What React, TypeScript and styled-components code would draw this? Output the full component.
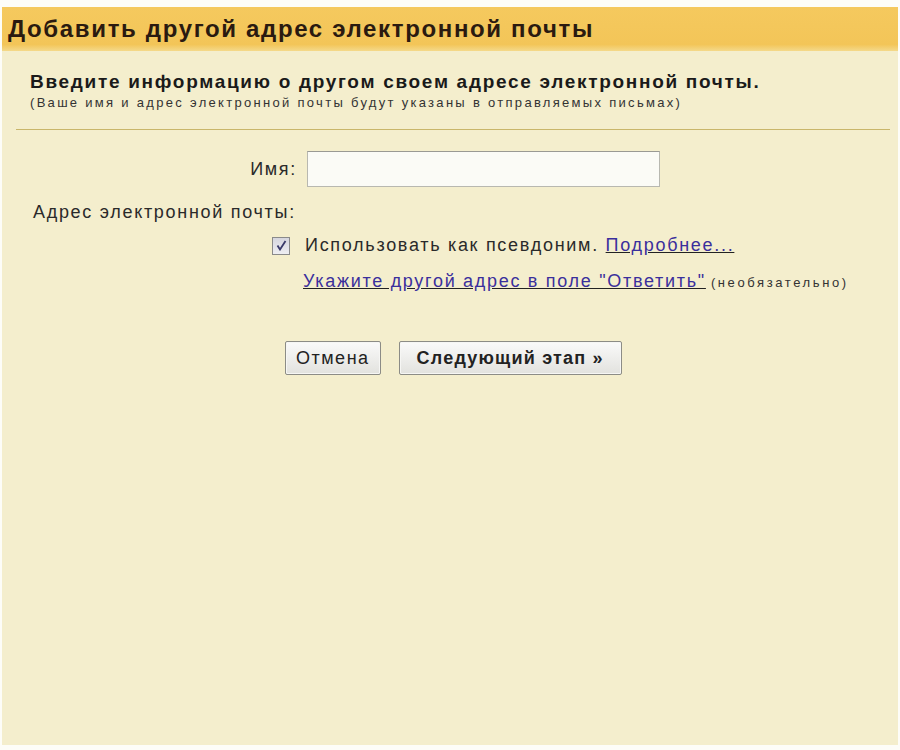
import React from "react";
import styled, { createGlobalStyle } from "styled-components";

const Global = createGlobalStyle`
  html, body { margin: 0; padding: 0; background: #fdfdf8; }
  body { font-family: "Liberation Sans", Arial, sans-serif; color: #1e1e1e; }
`;

const Frame = styled.div`
  margin: 7px 2px 0 2px;
  height: 738px;
  background: #f4eecd;
  display: flex;
  flex-direction: column;
`;

const Header = styled.div`
  height: 44px;
  background: linear-gradient(#f5c95e, #f3c558 85%, #f4d98a);
  display: flex;
  align-items: center;
  padding-left: 6px;
`;

const Title = styled.h1`
  margin: 0;
  font-size: 24px;
  line-height: 28px;
  font-weight: bold;
  color: #2a1a10;
  letter-spacing: 1.65px;
`;

const Intro = styled.div`
  padding: 20px 0 0 28px;
`;

const Lead = styled.div`
  font-size: 19px;
  font-weight: bold;
  color: #1a1a1a;
  line-height: 22px;
  letter-spacing: 1.7px;
`;

const Note = styled.div`
  font-size: 13px;
  color: #333;
  line-height: 20px;
  letter-spacing: 2.3px;
`;

const Divider = styled.hr`
  margin: 16px 8px 0 14px;
  border: 0;
  border-top: 1px solid #c9b66a;
`;

const Form = styled.div`
  display: grid;
  grid-template-columns: 295px 1fr;
  column-gap: 10px;
  align-items: center;
  padding-top: 21px;
`;

const Label = styled.label<{ $full?: boolean }>`
  font-size: 18px;
  line-height: 21px;
  letter-spacing: 1.7px;
  color: #2a2a2a;
  text-align: ${(p) => (p.$full ? "left" : "right")};
  padding-left: ${(p) => (p.$full ? "31px" : "0")};
  grid-column: ${(p) => (p.$full ? "1 / span 2" : "auto")};
`;

const TextInput = styled.input`
  width: 353px;
  height: 36px;
  box-sizing: border-box;
  border: 1px solid #b8b8b0;
  border-top-color: #9a9a94;
  background: #fbfbf6;
  margin: 0;
`;

const Gap = styled.div<{ $h: number }>`
  grid-column: 1 / span 2;
  height: ${(p) => p.$h}px;
`;

const CheckRow = styled.div`
  grid-column: 1 / span 2;
  padding-left: 270px;
  display: flex;
  align-items: center;
  gap: 15px;
  font-size: 18px;
  line-height: 21px;
  letter-spacing: 1.7px;
  color: #2a2a2a;
`;

const Box = styled.span`
  width: 18px;
  height: 18px;
  box-sizing: border-box;
  border: 1px solid #8a8a8a;
  background: linear-gradient(#d6d6de, #eeeef2);
  display: inline-flex;
  align-items: center;
  justify-content: center;
`;

const Link = styled.a`
  color: #3a2f9c;
  text-decoration: underline;
  text-decoration-color: #222;
  cursor: pointer;
`;

const ReplyRow = styled.div`
  grid-column: 1 / span 2;
  padding-left: 301px;
  font-size: 18px;
  line-height: 21px;
  letter-spacing: 1.7px;
  display: flex;
  align-items: baseline;
  gap: 5px;
`;

const Small = styled.span`
  font-size: 13px;
  color: #333;
  letter-spacing: 2.6px;
`;

const Buttons = styled.div`
  display: flex;
  gap: 18px;
  padding: 48px 0 0 283px;
`;

const Button = styled.button<{ $primary?: boolean }>`
  height: 34px;
  padding: 0 ${(p) => (p.$primary ? "17px" : "10px")};
  font-family: "Liberation Sans", Arial, sans-serif;
  font-size: 18px;
  letter-spacing: ${(p) => (p.$primary ? "1.2px" : "1.5px")};
  font-weight: ${(p) => (p.$primary ? "bold" : "normal")};
  color: #222;
  background: linear-gradient(#fafafa, #e2e2de);
  border: 1px solid #8c8c86;
  border-radius: 2px;
  box-shadow: inset 0 0 0 1px #f6f6f4;
`;

export default function App() {
  return (
    <>
      <Global />
      <Frame>
        <Header>
          <Title>Добавить другой адрес электронной почты</Title>
        </Header>
        <Intro>
          <Lead>Введите информацию о другом своем адресе электронной почты.</Lead>
          <Note>(Ваше имя и адрес электронной почты будут указаны в отправляемых письмах)</Note>
        </Intro>
        <Divider />
        <Form>
          <Label>Имя:</Label>
          <TextInput type="text" />
          <Gap $h={15} />
          <Label $full>Адрес электронной почты:</Label>
          <Gap $h={12} />
          <CheckRow>
            <Box>
              <svg width="11" height="11" viewBox="0 0 11 11">
                <path d="M1.5 5.5 L4 9.5 L9.5 1" fill="none" stroke="#3a3a6a" strokeWidth="1.8" />
              </svg>
            </Box>
            <span>
              Использовать как псевдоним. <Link>Подробнее...</Link>
            </span>
          </CheckRow>
          <Gap $h={15} />
          <ReplyRow>
            <Link>Укажите другой адрес в поле "Ответить"</Link>
            <Small>(необязательно)</Small>
          </ReplyRow>
        </Form>
        <Buttons>
          <Button>Отмена</Button>
          <Button $primary>Следующий этап »</Button>
        </Buttons>
      </Frame>
    </>
  );
}
